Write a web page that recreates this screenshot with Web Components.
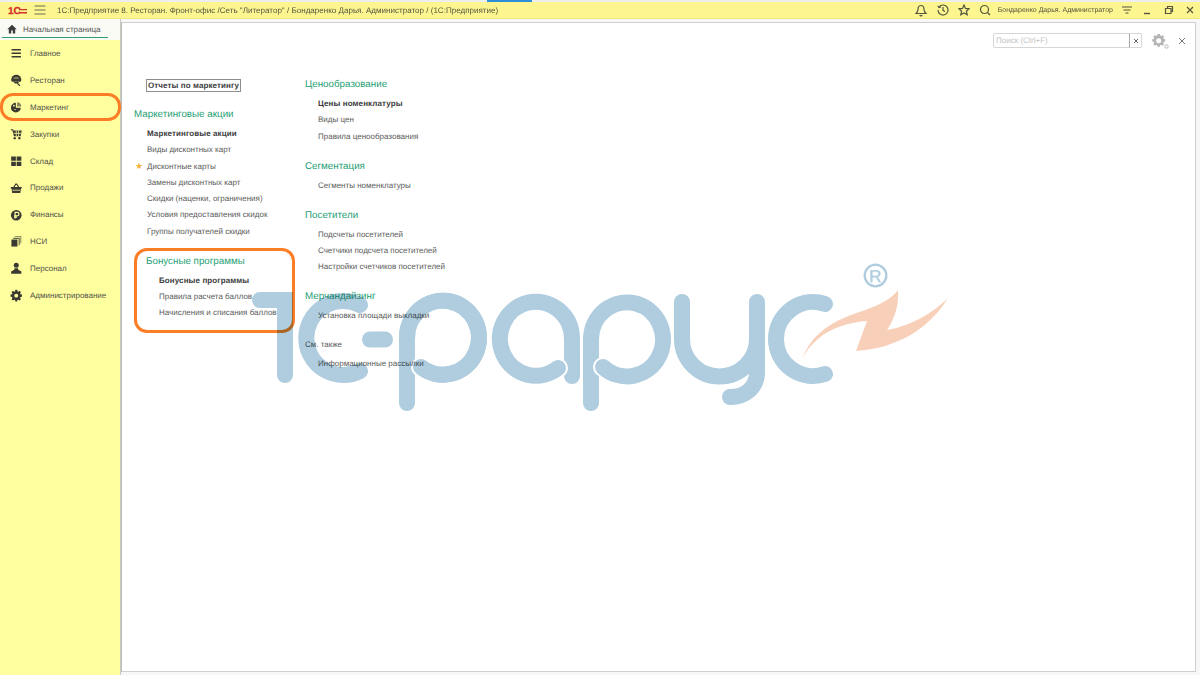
<!DOCTYPE html>
<html lang="ru">
<head>
<meta charset="utf-8">
<title>1С:Предприятие</title>
<style>
html, body { margin: 0; height: 100%; }
body { width: 1200px; height: 675px; overflow: hidden; position: relative; font-family: "Liberation Sans", Arial, sans-serif; background: #f7f7f7; text-rendering: geometricPrecision; }
</style>
</head>
<body>
<app-shell>
  <title-bar slot="top"></title-bar>
  <side-nav slot="side">
    <nav-item icon="menu">Главное</nav-item>
    <nav-item icon="rest">Ресторан</nav-item>
    <nav-item icon="market" active>Маркетинг</nav-item>
    <nav-item icon="cart">Закупки</nav-item>
    <nav-item icon="grid">Склад</nav-item>
    <nav-item icon="basket">Продажи</nav-item>
    <nav-item icon="rub">Финансы</nav-item>
    <nav-item icon="docs">НСИ</nav-item>
    <nav-item icon="user">Персонал</nav-item>
    <nav-item icon="gear">Администрирование</nav-item>
  </side-nav>
  <main-panel slot="main">
    <div slot="col1">
      <report-button>Отчеты по маркетингу</report-button>
      <link-group title="Маркетинговые акции">
        <group-link strong>Маркетинговые акции</group-link>
        <group-link>Виды дисконтных карт</group-link>
        <group-link star>Дисконтные карты</group-link>
        <group-link>Замены дисконтных карт</group-link>
        <group-link>Скидки (наценки, ограничения)</group-link>
        <group-link>Условия предоставления скидок</group-link>
        <group-link>Группы получателей скидки</group-link>
      </link-group>
      <link-group title="Бонусные программы" nested>
        <group-link strong>Бонусные программы</group-link>
        <group-link>Правила расчета баллов</group-link>
        <group-link>Начисления и списания баллов</group-link>
      </link-group>
    </div>
    <div slot="col2">
      <link-group title="Ценообразование">
        <group-link strong>Цены номенклатуры</group-link>
        <group-link>Виды цен</group-link>
        <group-link>Правила ценообразования</group-link>
      </link-group>
      <link-group title="Сегментация">
        <group-link>Сегменты номенклатуры</group-link>
      </link-group>
      <link-group title="Посетители">
        <group-link>Подсчеты посетителей</group-link>
        <group-link>Счетчики подсчета посетителей</group-link>
        <group-link>Настройки счетчиков посетителей</group-link>
      </link-group>
      <link-group title="Мерчандайзинг">
        <group-link>Установка площади выкладки</group-link>
      </link-group>
      <link-group title="См. также" plain>
        <group-link>Информационные рассылки</group-link>
      </link-group>
    </div>
  </main-panel>
</app-shell>
<orange-callout style="left:0;top:93px;width:121px;height:28px;--r:13px"></orange-callout>
<orange-callout style="left:134px;top:248px;width:161px;height:85px;--r:13px"></orange-callout>
<brand-watermark></brand-watermark>

<script>
// ------------------------------------------------ ICONS -------------------------------------------------------
const ICONS = {
  menu: `<path d="M2 2.500h12v2H2zM2 7h12v2H2zM2 11.500h12v2H2z"/>`,
  rest: `<path d="M1.500 7.500a6.500 6.500 0 1 1 13 0c0 1-.3 1.800-.9 2.300H2.400C1.800 9.300 1.500 8.500 1.500 7.500z"/><path d="M4.500 10.300h7L10 12.300H6.500z"/><path d="M10 11.500l3.300 3-1 1.200-3.500-3.200z"/><path d="M4 6.500a4.200 4.200 0 0 1 8 0z" fill="#ffff9f" opacity=".35"/>`,
  market: `<path d="M7.500 2.200v6.300h6.300A6.300 6.300 0 1 1 7.500 2.200z"/><path d="M9 1.500a5.800 5.800 0 0 1 5.500 5.500H9z" opacity=".6"/><circle cx="5" cy="6" r="1.100" fill="#ffff9f"/><circle cx="6.500" cy="11" r=".9" fill="#ffff9f"/>`,
  cart: `<path d="M1 1.500h3l.4 1.700h10.600l-1.300 7.300H5L3 3H1z"/><circle cx="6" cy="13" r="1.500"/><circle cx="12" cy="13" r="1.500"/><path d="M8 3v8M11 3v8M4.500 6.800h10" stroke="#ffff9f" stroke-width="1" fill="none"/>`,
  grid: `<path d="M1.500 2h6v5.500h-6zM8.500 2h6v5.500h-6zM1.500 8.500h6V14h-6zM8.500 8.500h6V14h-6z"/>`,
  basket: `<path d="M1 6.500h14v1.700h-1l-.8 5.800H2.800L2 8.200H1z"/><path d="M4.200 6.500 7 2h2l2.800 4.500h-1.700L8.300 3.600h-.6L5.900 6.500z"/><path d="M3.200 10.500h9.600" stroke="#ffff9f" stroke-width="1"/>`,
  rub: `<circle cx="8" cy="8" r="6.800"/><path d="M6.500 12.300V4.300h2.800a2.200 2.200 0 0 1 0 4.500H5.200M5.200 10.600h3.800" stroke="#ffff9f" stroke-width="1.500" fill="none"/>`,
  docs: `<path d="M6 1.200h8.500v9.500H13V2.700H6z" opacity=".55"/><path d="M4 3.500h8.500v9.500H11V5H4z" opacity=".75"/><path d="M1.800 5.800h7.700v9H1.800z"/>`,
  user: `<circle cx="8" cy="4.300" r="3.200"/><path d="M5.800 8h4.400l.4 1.800L14.500 12v3h-13v-3l3.900-2.200z"/>`,
  gear: `<path fill-rule="evenodd" d="M6.800 1h2.400l.3 1.900 1.200.5 1.600-1.100 1.700 1.700-1.100 1.600.5 1.200 1.900.3v2.800l-1.900.3-.5 1.200 1.100 1.600-1.700 1.700-1.600-1.100-1.200.5-.3 1.900H6.800l-.3-1.900-1.200-.5-1.600 1.100L2 13l1.100-1.600-.5-1.200-1.900-.3V7.100l1.900-.3.500-1.200L2 4l1.700-1.700 1.600 1.100 1.200-.5zM8 6a2.500 2.500 0 1 0 0 5 2.500 2.500 0 0 0 0-5z"/>`
};

// ------------------------------------------------ APP SHELL -------------------------------------------------------
class AppShell extends HTMLElement {
  constructor() {
    super();
    this.attachShadow({ mode: "open" });
    this.shadowRoot.innerHTML = `
    <style>
      :host { display: grid; grid-template-columns: 120px 1fr; grid-template-rows: 19px 1fr; width: 1200px; height: 675px; filter: blur(.3px); }
      ::slotted([slot="top"]) { grid-column: 1 / 3; }
    </style>
    <slot name="top"></slot>
    <slot name="side"></slot>
    <slot name="main"></slot>`;
  }
}
customElements.define("app-shell", AppShell);

class TitleBar extends HTMLElement {
  constructor() {
    super();
    this.attachShadow({ mode: "open" });
    this.shadowRoot.innerHTML = `
    <style>
      :host { display: flex; align-items: center; box-sizing: border-box; height: 19px; position: relative; background: #fdf690; border-top: 2px solid #eeeeee; border-bottom: 1px solid #f2e67c; font-size: 8.050px; color: #55553f; }
      .logo { width: 19px; height: 12px; margin-left: 8px; display: block; }
      .burger { width: 14px; height: 12px; margin-left: 6px; display: block; }
      .title { margin-left: 10px; white-space: nowrap; flex: 1; }
      .tools { display: flex; align-items: center; }
      svg { display: block; }
      .tools svg { fill: none; stroke: #55553f; stroke-width: 1.200; }
      .user { margin: 0 8px 0 7px; white-space: nowrap; font-size: 7px; }
      .strip { position: absolute; left: 487px; top: -2px; width: 45px; height: 2px; background: #2d8fd8; }
    </style>
    <div class="strip"></div>
    <svg class="logo" viewBox="0 0 19 12"><text x="0" y="9.500" font-family="Liberation Sans" font-weight="700" font-size="10" fill="#d4312a" stroke="#d4312a" stroke-width=".3">1С</text><path d="M11 5h8v1.200h-8zM11 8h8v1.500h-8z" fill="#d4312a"/></svg>
    <svg class="burger" viewBox="0 0 14 12"><path d="M1.500 2h11M1.500 6h11M1.500 10h11" stroke="#6a6a55" fill="none"/></svg>
    <span class="title">1С:Предприятие 8. Ресторан. Фронт-офис /Сеть "Литератор" / Бондаренко Дарья. Администратор /  (1С:Предприятие)</span>
    <div class="tools">
      <svg width="12" height="13" viewBox="0 0 12 13" style="margin-right:10px"><path d="M6 1.500C3.500 1.500 3 3.500 3 5.500c0 2-1 3-2 4h10c-1-1-2-2-2-4 0-2-.5-4-3-4zM4.800 11a1.300 1.300 0 0 0 2.400 0"/></svg>
      <svg width="12" height="12" viewBox="0 0 12 12" style="margin-right:9px"><path d="M2 3a5 5 0 1 1-1 3M.8 1.800 2 3.500l1.800-.4M6 3v3.300l2 1.200"/></svg>
      <svg width="12" height="12" viewBox="0 0 12 12" style="margin-right:9px"><path d="M6 1l1.500 3.400 3.600.4-2.700 2.400.8 3.600L6 9l-3.200 1.800.8-3.600L.9 4.800l3.600-.4z"/></svg>
      <svg width="12" height="12" viewBox="0 0 12 12"><circle cx="5.500" cy="5.500" r="4"/><path d="M8.500 8.500l2.500 2.500"/></svg>
      <span class="user">Бондаренко Дарья. Администратор</span>
      <svg width="12" height="10" viewBox="0 0 12 10" style="margin-right:9px"><path d="M1 2h10M2.500 5h7M4.500 8h3"/></svg>
      <svg width="10" height="10" viewBox="0 0 10 10" style="margin-right:12px"><path d="M2 8.500h6" stroke-width="1.400"/></svg>
      <svg width="10" height="10" viewBox="0 0 10 10" style="margin-right:11px"><path d="M1.500 3.500h5.500v5h-5.500zM3.500 3.500V1.500h5v5H7"/></svg>
      <svg width="10" height="10" viewBox="0 0 10 10" style="margin-right:5px"><path d="M2 2l6 6M8 2 2 8"/></svg>
    </div>`;
  }
}
customElements.define("title-bar", TitleBar);

// ------------------------------------------------ SIDE NAV -------------------------------------------------------
class SideNav extends HTMLElement {
  constructor() {
    super();
    this.attachShadow({ mode: "open" });
    this.shadowRoot.innerHTML = `
    <style>
      :host { display: flex; flex-direction: column; background: #ffff9f; border-right: 1px solid #c9c9c0; box-sizing: border-box; width: 121px; height: 656px; }
      .head { background: #fafaf4; height: 21px; box-sizing: border-box; flex: none; }
      .tab { box-sizing: border-box; height: 19px; width: 106px; border-bottom: 1.500px solid #2f9e78; margin-left: 2px; display: flex; align-items: center; font-size: 8px; color: #555; white-space: nowrap; padding: 2px 0 0 5px; gap: 6px; }
      .tab svg { width: 10px; height: 10px; fill: #3d3d3d; flex: none; }
      .items { display: flex; flex-direction: column; }
    </style>
    <div class="head"><div class="tab"><svg viewBox="0 0 10 10"><path d="M5 .8 .3 5.200h1.500V9.500h2.400V6.500h1.600v3h2.400V5.200h1.500z"/></svg>Начальная страница</div></div>
    <div class="items"><slot></slot></div>`;
  }
}
customElements.define("side-nav", SideNav);

class NavItem extends HTMLElement {
  constructor() {
    super();
    this.attachShadow({ mode: "open" });
    const icon = ICONS[this.getAttribute("icon")] || "";
    this.shadowRoot.innerHTML = `
    <style>
      :host { display: flex; align-items: center; height: 26.900px; box-sizing: border-box; padding-left: 10px; font-size: 8px; color: #50504a; white-space: nowrap; }
      svg { width: 12.500px; height: 12.500px; fill: #3a3a32; flex: none; margin-right: 7.500px; }
    </style>
    <svg viewBox="0 0 16 16">${icon}</svg><slot></slot>`;
  }
}
customElements.define("nav-item", NavItem);

// ------------------------------------------------ MAIN PANEL -------------------------------------------------------
class MainPanel extends HTMLElement {
  constructor() {
    super();
    this.attachShadow({ mode: "open" });
    this.shadowRoot.innerHTML = `
    <style>
      :host { display: block; box-sizing: border-box; margin: 3px 4px 3px 1px; background: #fff; border: 1px solid #cfcfcf; border-left-color: #bdbdbd; position: relative; height: 650px; }
      .search { display: flex; align-items: center; justify-content: flex-end; padding: 10px 9px 0 0; height: 15px; }
      .input { box-sizing: border-box; width: 137px; height: 15px; border: 1px solid #d6d6d6; border-radius: 2px; font-size: 8px; color: #c4c4c4; padding: 2px 0 0 2px; }
      .clear { box-sizing: border-box; width: 13px; height: 15px; border: 1px solid #d6d6d6; border-left-color: #aaa; border-radius: 0 2px 2px 0; margin-left: -1px; display: flex; align-items: center; justify-content: center; }
      .gear { margin-left: 9px; width: 18px; height: 16px; }
      .close { margin-left: 9px; }
      .cols { display: flex; padding-top: 30px; padding-left: 12px; }
      .c1 { width: 171px; }
    </style>
    <div class="search">
      <div class="input">Поиск (Ctrl+F)</div>
      <div class="clear"><svg width="6" height="6" viewBox="0 0 6 6"><path d="M1 1l4 4M5 1 1 5" stroke="#666" fill="none"/></svg></div>
      <svg class="gear" viewBox="0 0 18 16"><path fill="#b5b5b5" fill-rule="evenodd" d="M6.500 1h2.400l.3 1.500 1 .4 1.300-.8 1.600 1.600-.8 1.300.4 1 1.500.3v2.200l-1.500.3-.4 1 .8 1.300-1.600 1.600-1.300-.8-1 .4-.3 1.500H6.500l-.3-1.500-1-.4-1.300.8-1.600-1.600.8-1.300-.4-1-1.500-.3V6.300l1.500-.3.4-1-.8-1.300 1.600-1.600 1.300.8 1-.4zM7.700 5.200a2.500 2.500 0 1 0 0 5 2.500 2.500 0 0 0 0-5z"/><circle cx="15.500" cy="13.500" r="1.700" fill="none" stroke="#b5b5b5"/></svg>
      <svg class="close" width="8" height="8" viewBox="0 0 8 8"><path d="M1 1l6 6M7 1 1 7" stroke="#777" fill="none"/></svg>
    </div>
    <div class="cols">
      <div class="c1"><slot name="col1"></slot></div>
      <div><slot name="col2"></slot></div>
    </div>`;
  }
}
customElements.define("main-panel", MainPanel);

class ReportButton extends HTMLElement {
  constructor() {
    super();
    this.attachShadow({ mode: "open" });
    this.shadowRoot.innerHTML = `
    <style>
      :host { display: block; box-sizing: border-box; width: 95px; height: 13px; margin: 1px 0 16px 12px; border: 1px solid #8d8d8d; font-size: 8px; font-weight: 700; line-height: 11px; letter-spacing: .1px; color: #3c3c3c; white-space: nowrap; padding-left: 1px; }
    </style>
    <slot></slot>`;
  }
}
customElements.define("report-button", ReportButton);

class LinkGroup extends HTMLElement {
  constructor() {
    super();
    this.attachShadow({ mode: "open" });
    this.shadowRoot.innerHTML = `
    <style>
      :host { display: block; margin-bottom: 14.700px; }
      :host([plain]) { margin-top: -1px; }
      :host([nested]) { margin-left: 12px; }
      h3 { margin: 0; font-weight: 400; font-size: 9.800px; line-height: 14px; color: #27a075; padding-bottom: 4px; }
      :host([plain]) h3 { font-size: 8px; color: #5a5a5a; padding-bottom: 3.500px; }
      .links { display: flex; flex-direction: column; padding-left: 13px; }
    </style>
    <h3>${this.getAttribute("title")}</h3>
    <div class="links"><slot></slot></div>`;
  }
}
customElements.define("link-group", LinkGroup);

class GroupLink extends HTMLElement {
  constructor() {
    super();
    this.attachShadow({ mode: "open" });
    this.shadowRoot.innerHTML = `
    <style>
      :host { display: block; height: 16.300px; line-height: 16.300px; font-size: 8px; color: #5a5a5a; white-space: nowrap; position: relative; }
      :host([strong]) { font-weight: 700; color: #3c3c3c; letter-spacing: .1px; }
      .star { position: absolute; left: -12px; top: 0; color: #f2b33a; font-size: 9px; font-family: "DejaVu Sans", sans-serif; }
    </style>
    ${this.hasAttribute("star") ? `<span class="star">★</span>` : ""}<slot></slot>`;
  }
}
customElements.define("group-link", GroupLink);

// ------------------------------------------------ OVERLAYS -------------------------------------------------------
class OrangeCallout extends HTMLElement {
  constructor() {
    super();
    this.attachShadow({ mode: "open" });
    this.shadowRoot.innerHTML = `
    <style>
      :host { display: block; position: absolute; box-sizing: border-box; border: 3px solid #fb7d26; border-radius: var(--r); }
    </style>`;
  }
}
customElements.define("orange-callout", OrangeCallout);

class BrandWatermark extends HTMLElement {
  constructor() {
    super();
    this.attachShadow({ mode: "open" });
    this.shadowRoot.innerHTML = `
    <style>
      :host { display: block; position: absolute; left: 0; top: 0; width: 1200px; height: 675px; pointer-events: none; mix-blend-mode: multiply; }
      svg { display: block; }
      .b { fill: none; stroke: #afcddf; stroke-width: 16; stroke-linecap: round; }
    </style>
    <svg width="1200" height="675" viewBox="0 0 1200 675">
      <!-- 1 -->
      <path class="b" style="stroke-linejoin:miter" d="M260 300H285V375"/>
      <!-- С -->
      <path class="b" d="M360 305A37 37 0 1 0 360 371"/>
      <!-- dash -->
      <path class="b" d="M370 339.500H385"/>
      <!-- р -->
      <path class="b" d="M407 403V339A36 37 0 1 1 421 367"/>
      <circle cx="421" cy="367" r="10" fill="#fff"/>
      <path class="b" d="M407 339A36 37 0 1 1 421 367"/>
      <!-- а -->
      <path class="b" d="M572 376V339"/>
      <circle cx="558" cy="368" r="10" fill="#fff"/>
      <path class="b" d="M572 339A36 37 0 1 0 558 368"/>
      <!-- р -->
      <path class="b" d="M591 403V339"/>
      <circle cx="603" cy="367" r="10" fill="#fff"/>
      <path class="b" d="M591 339A36 37 0 1 1 603 367"/>
      <!-- у -->
      <path class="b" d="M682 302V339A37 37 0 0 0 757 339V302"/>
      <path class="b" d="M757 339V372C757 388 745 397 730 397"/>
      <!-- с -->
      <path class="b" d="M825 304A37 37 0 1 0 825 374"/>
      <!-- молния -->
      <path fill="#f8d0b9" d="M802 359C810 338 826 325 846 317C866 309 886 305 898 290C899 305 895 318 887 330C910 326 932 314 948 298C934 320 916 335 893 343C882 348 868 350 856 351L867 321C850 322 830 328 818 339C811 345 806 351 802 359Z"/>
      <!-- R -->
      <circle cx="875.500" cy="275.500" r="10.800" fill="none" stroke="#afcddf" stroke-width="2.300"/>
      <text x="875.500" y="281.500" text-anchor="middle" font-family="Liberation Sans" font-size="17" fill="#afcddf" stroke="#afcddf" stroke-width=".4">R</text>
    </svg>`;
  }
}
customElements.define("brand-watermark", BrandWatermark);
</script>
</body>
</html>
